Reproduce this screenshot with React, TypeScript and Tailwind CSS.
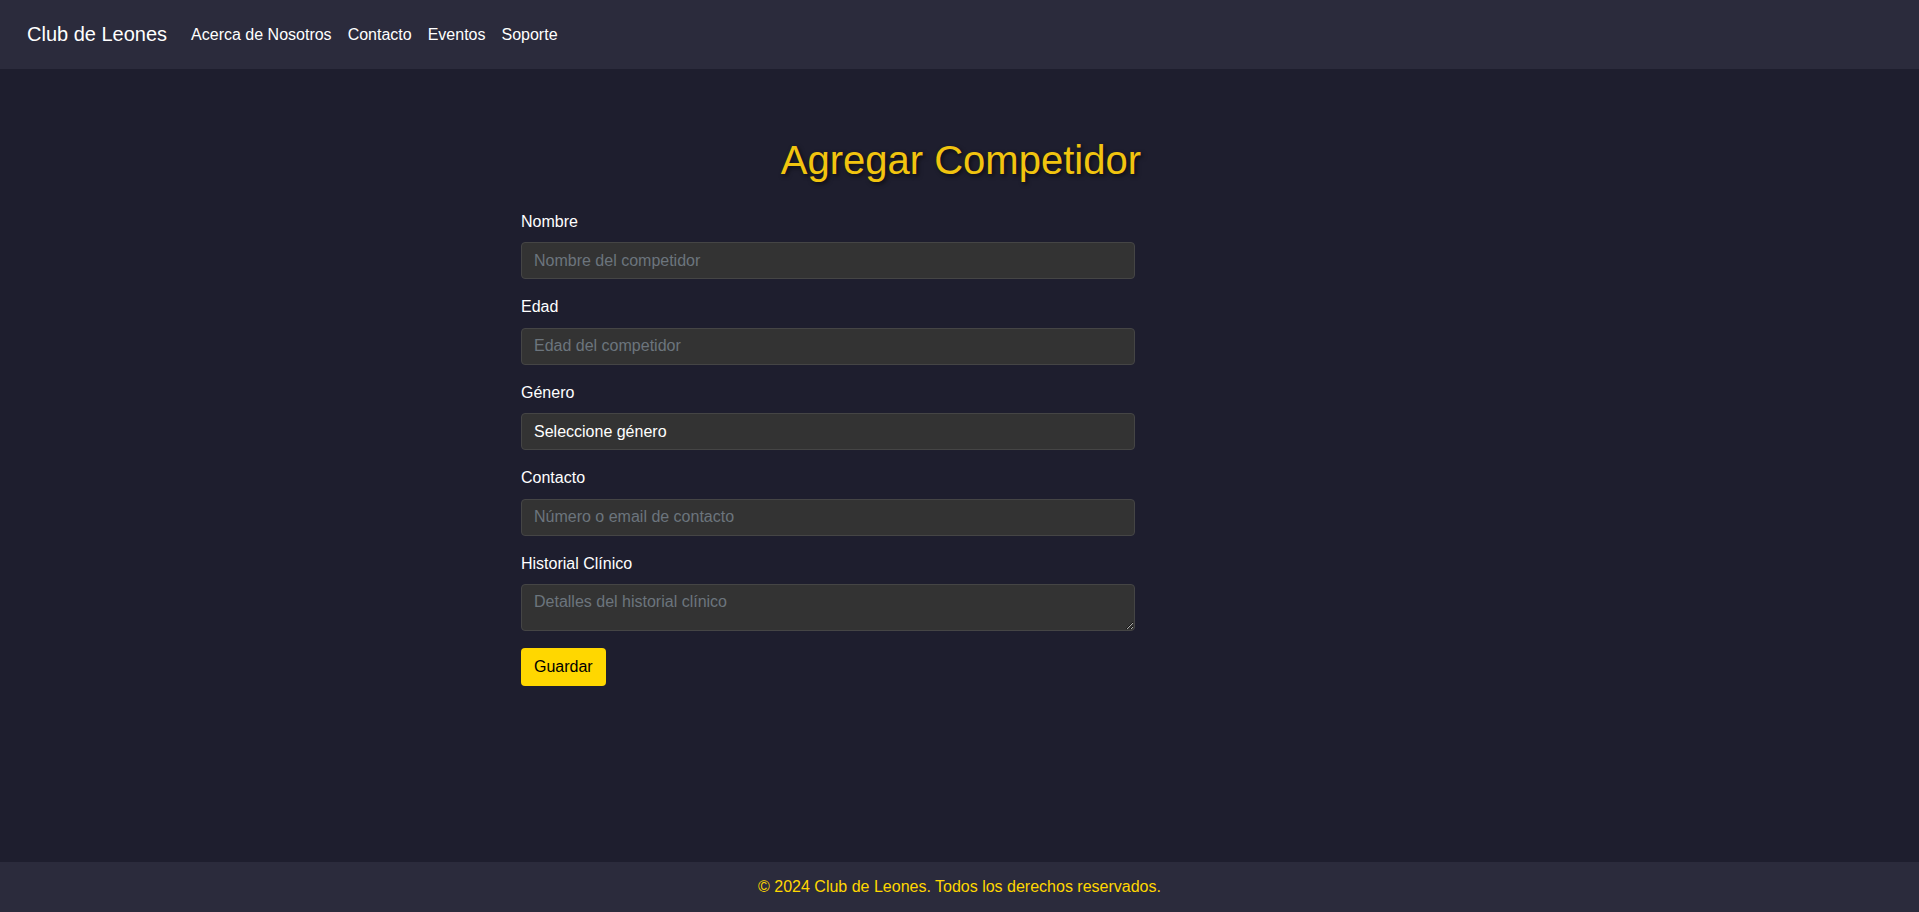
import React from "react";

const fields = [
  { label: "Nombre", placeholder: "Nombre del competidor", type: "text" },
  { label: "Edad", placeholder: "Edad del competidor", type: "number" },
];

const navLinks = ["Acerca de Nosotros", "Contacto", "Eventos", "Soporte"];

const inputClass =
  "block w-full h-[37px] px-3 rounded bg-[#333333] border border-[#454545] text-white text-base leading-[normal] placeholder:text-[#6c757d] outline-none";

const Label = ({ children }: { children: React.ReactNode }) => (
  <label className="block mb-[11.5px] text-white text-base leading-[normal]">
    {children}
  </label>
);

export default function App() {
  return (
    <div className="min-h-screen flex flex-col bg-[#1e1e2e] font-['Liberation_Sans',Arial,sans-serif]">
      <nav className="h-[69px] flex items-center px-[27px] bg-[#2b2b3c]">
        <span className="text-white text-[20px] leading-[normal] mr-6">
          Club de Leones
        </span>
        <ul className="flex gap-4">
          {navLinks.map((link) => (
            <li key={link}>
              <a href="#" className="text-white text-base leading-[normal]">
                {link}
              </a>
            </li>
          ))}
        </ul>
      </nav>

      <main className="flex-1 pt-[69px]">
        <div className="ml-[521px] w-[620px]">
          <h1 className="text-right text-[40px] leading-[normal] text-[#f1c40f] [text-shadow:2px_2px_4px_rgba(0,0,0,0.6)] mb-[29.5px]">
            Agregar Competidor
          </h1>

          <form className="w-[614px] flex flex-col gap-[19px]">
            {fields.map((f) => (
              <div key={f.label}>
                <Label>{f.label}</Label>
                <input type="text" placeholder={f.placeholder} className={inputClass} />
              </div>
            ))}

            <div>
              <Label>Género</Label>
              <select className={`${inputClass} appearance-none`} defaultValue="">
                <option value="">Seleccione género</option>
                <option value="m">Masculino</option>
                <option value="f">Femenino</option>
              </select>
            </div>

            <div>
              <Label>Contacto</Label>
              <input
                type="text"
                placeholder="Número o email de contacto"
                className={inputClass}
              />
            </div>

            <div>
              <Label>Historial Clínico</Label>
              <textarea
                placeholder="Detalles del historial clínico"
                className="block w-full h-[47px] px-3 py-2 rounded bg-[#333333] border border-[#454545] text-white text-base leading-[normal] placeholder:text-[#6c757d] outline-none"
              />
            </div>

            <div className="-mt-[2px]">
              <button
                type="button"
                className="h-[38px] px-[13px] rounded bg-[#ffd700] text-black text-base leading-[normal]"
              >
                Guardar
              </button>
            </div>
          </form>
        </div>
      </main>

      <footer className="h-[50px] flex items-center justify-center bg-[#2b2b3c]">
        <p className="text-[#ffd700] text-base leading-[normal]">
          © 2024 Club de Leones. Todos los derechos reservados.
        </p>
      </footer>
    </div>
  );
}
